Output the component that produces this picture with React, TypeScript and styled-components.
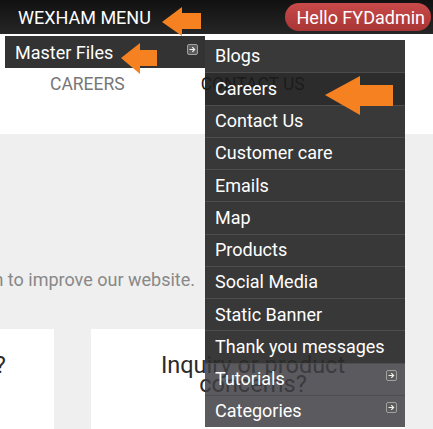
import React, { FC } from 'react';
import styled, { createGlobalStyle } from 'styled-components';

const GlobalStyle = createGlobalStyle`
	html, body {
		margin: 0;
		padding: 0;
	}
	body {
		font-family: Roboto, 'Liberation Sans', sans-serif;
		background: #fff;
		overflow: hidden;
	}
`;

const flyoutItems = [
	{ id: 1, name: 'Blogs' },
	{ id: 2, name: 'Careers', active: true },
	{ id: 3, name: 'Contact Us' },
	{ id: 4, name: 'Customer care' },
	{ id: 5, name: 'Emails' },
	{ id: 6, name: 'Map' },
	{ id: 7, name: 'Products' },
	{ id: 8, name: 'Social Media' },
	{ id: 9, name: 'Static Banner' },
	{ id: 10, name: 'Thank you messages' },
	{ id: 11, name: 'Tutorials', parent: true },
	{ id: 12, name: 'Categories', parent: true },
];

const Page = styled.div`
	position: relative;
	width: 433px;
	height: 429px;
	overflow: hidden;
`;

const TopBar = styled.header`
	height: 34px;
	display: flex;
	align-items: center;
	justify-content: space-between;
	background: linear-gradient(#111, #262626);
`;

const Brand = styled.span`
	color: #fff;
	font-size: 18px;
	padding-left: 18px;
`;

const Greeting = styled.span`
	height: 28px;
	margin-right: 2px;
	padding: 0 6px 0 12px;
	border-radius: 14px;
	display: flex;
	align-items: center;
	background: linear-gradient(#c94a4a, #a83535);
	color: #fff;
	font-size: 18px;
`;

const NavBand = styled.nav`
	height: 100px;
	box-sizing: border-box;
	padding: 41px 0 0 50px;
	display: flex;
	gap: 76px;
`;

const NavLink = styled.span<{ $current?: boolean }>`
	font-size: 17.5px;
	line-height: 18px;
	text-transform: uppercase;
	color: ${(p) => (p.$current ? '#1a1a1a' : '#777')};
`;

const Content = styled.main`
	background: #efefef;
	height: 295px;
	display: flex;
	flex-direction: column;
`;

const Intro = styled.div`
	height: 195px;
	box-sizing: border-box;
	padding: 136px 238px 0 0;
	display: flex;
	justify-content: flex-end;
	overflow: hidden;
`;

const IntroText = styled.p`
	margin: 0;
	white-space: nowrap;
	font-size: 18px;
	line-height: 20px;
	color: #888;
`;

const CardsRow = styled.div`
	flex: 1;
	display: flex;
	justify-content: flex-end;
	gap: 37px;
	padding-right: 28px;
	overflow: hidden;
`;

const Card = styled.section<{ $inset: number }>`
	flex: 0 0 314px;
	background: #fff;
	box-sizing: border-box;
	padding: 27px 0 0 ${(p) => p.$inset}px;
	text-align: center;
`;

const CardTitle = styled.h3<{ $width: number }>`
	margin: 0 auto;
	width: ${(p) => p.$width}px;
	font-weight: 400;
	font-size: 23.5px;
	line-height: 19px;
	color: #2a2a2a;
`;

const CardText = styled.p`
	margin: 40px 0 0;
	font-size: 15px;
	color: #555;
`;

const MainMenu = styled.ul`
	position: absolute;
	top: 36px;
	left: 5px;
	width: 200px;
	margin: 0;
	padding: 0;
	list-style: none;
`;

const MenuItem = styled.li`
	height: 32px;
	box-sizing: border-box;
	padding: 0 7px 0 10px;
	display: flex;
	align-items: center;
	justify-content: space-between;
	background: #333;
	color: #fff;
	font-size: 18px;
`;

const Flyout = styled.ul`
	position: absolute;
	top: 40px;
	left: 205px;
	width: 200px;
	margin: 0;
	padding: 0;
	list-style: none;
`;

const FlyoutItem = styled.li<{ $active?: boolean; $parent?: boolean }>`
	height: 32.25px;
	box-sizing: border-box;
	padding: 0 8px 1px 10px;
	display: flex;
	align-items: center;
	justify-content: space-between;
	border-top: 1px solid rgba(78, 78, 78, 0.95);
	background: ${(p) =>
		p.$active
			? 'rgba(28, 28, 28, 0.93)'
			: p.$parent
			? 'rgba(62, 61, 66, 0.85)'
			: 'rgba(42, 42, 42, 0.93)'};
	color: #fff;
	font-size: 18px;

	&:first-child {
		border-top: none;
	}
`;

const IconBox = styled.svg`
	flex: none;
	margin-top: -6px;
`;

const Overlay = styled.svg`
	position: absolute;
	inset: 0;
	pointer-events: none;
`;

const SubIcon: FC = () => (
	<IconBox width='11' height='11' viewBox='0 0 11 11'>
		<rect x='0.5' y='0.5' width='10' height='10' rx='1.5' fill='#5c5c5c' stroke='#a0a0a0' />
		<path d='M2.5 5.5h5M5.3 3.2l2.3 2.3-2.3 2.3' fill='none' stroke='#f0f0f0' strokeWidth='1.2' />
	</IconBox>
);

// left-pointing block arrow: tip, head back x, head top/bottom, shaft top/bottom, tail x
const arrow = (tx: number, ty: number, hx: number, ht: number, hb: number, st: number, sb: number, ex: number) =>
	`${tx},${ty} ${hx},${ht} ${hx},${st} ${ex},${st} ${ex},${sb} ${hx},${sb} ${hx},${hb}`;

const App: FC = () => {
	return (
		<Page>
			<GlobalStyle />
			<TopBar>
				<Brand>WEXHAM MENU</Brand>
				<Greeting>Hello FYDadmin</Greeting>
			</TopBar>
			<NavBand>
				<NavLink>Careers</NavLink>
				<NavLink $current>Contact Us</NavLink>
			</NavBand>
			<Content>
				<Intro>
					<IntroText>We would love to hear your opinion to improve our website.</IntroText>
				</Intro>
				<CardsRow>
					<Card $inset={2}>
						<CardTitle $width={280}>Have any questions?</CardTitle>
					</Card>
					<Card $inset={10}>
						<CardTitle $width={200}>Inquiry or product concerns?</CardTitle>
						<CardText>info@wexham.com</CardText>
					</Card>
				</CardsRow>
			</Content>

			<MainMenu>
				<MenuItem>
					Master Files
					<SubIcon />
				</MenuItem>
			</MainMenu>
			<Flyout>
				{flyoutItems.map((item) => (
					<FlyoutItem key={item.id} $active={item.active} $parent={item.parent}>
						{item.name}
						{item.parent && <SubIcon />}
					</FlyoutItem>
				))}
			</Flyout>

			<Overlay width='433' height='429'>
				<polygon fill='#f68121' points={arrow(162, 22, 182, 7, 36, 13, 29, 201)} />
				<polygon fill='#f68121' points={arrow(121, 58, 140, 43, 74, 50, 66, 157)} />
				<polygon fill='#f68121' points={arrow(325, 95, 360, 76, 115, 85, 106, 393)} />
			</Overlay>
		</Page>
	);
};

export default App;
